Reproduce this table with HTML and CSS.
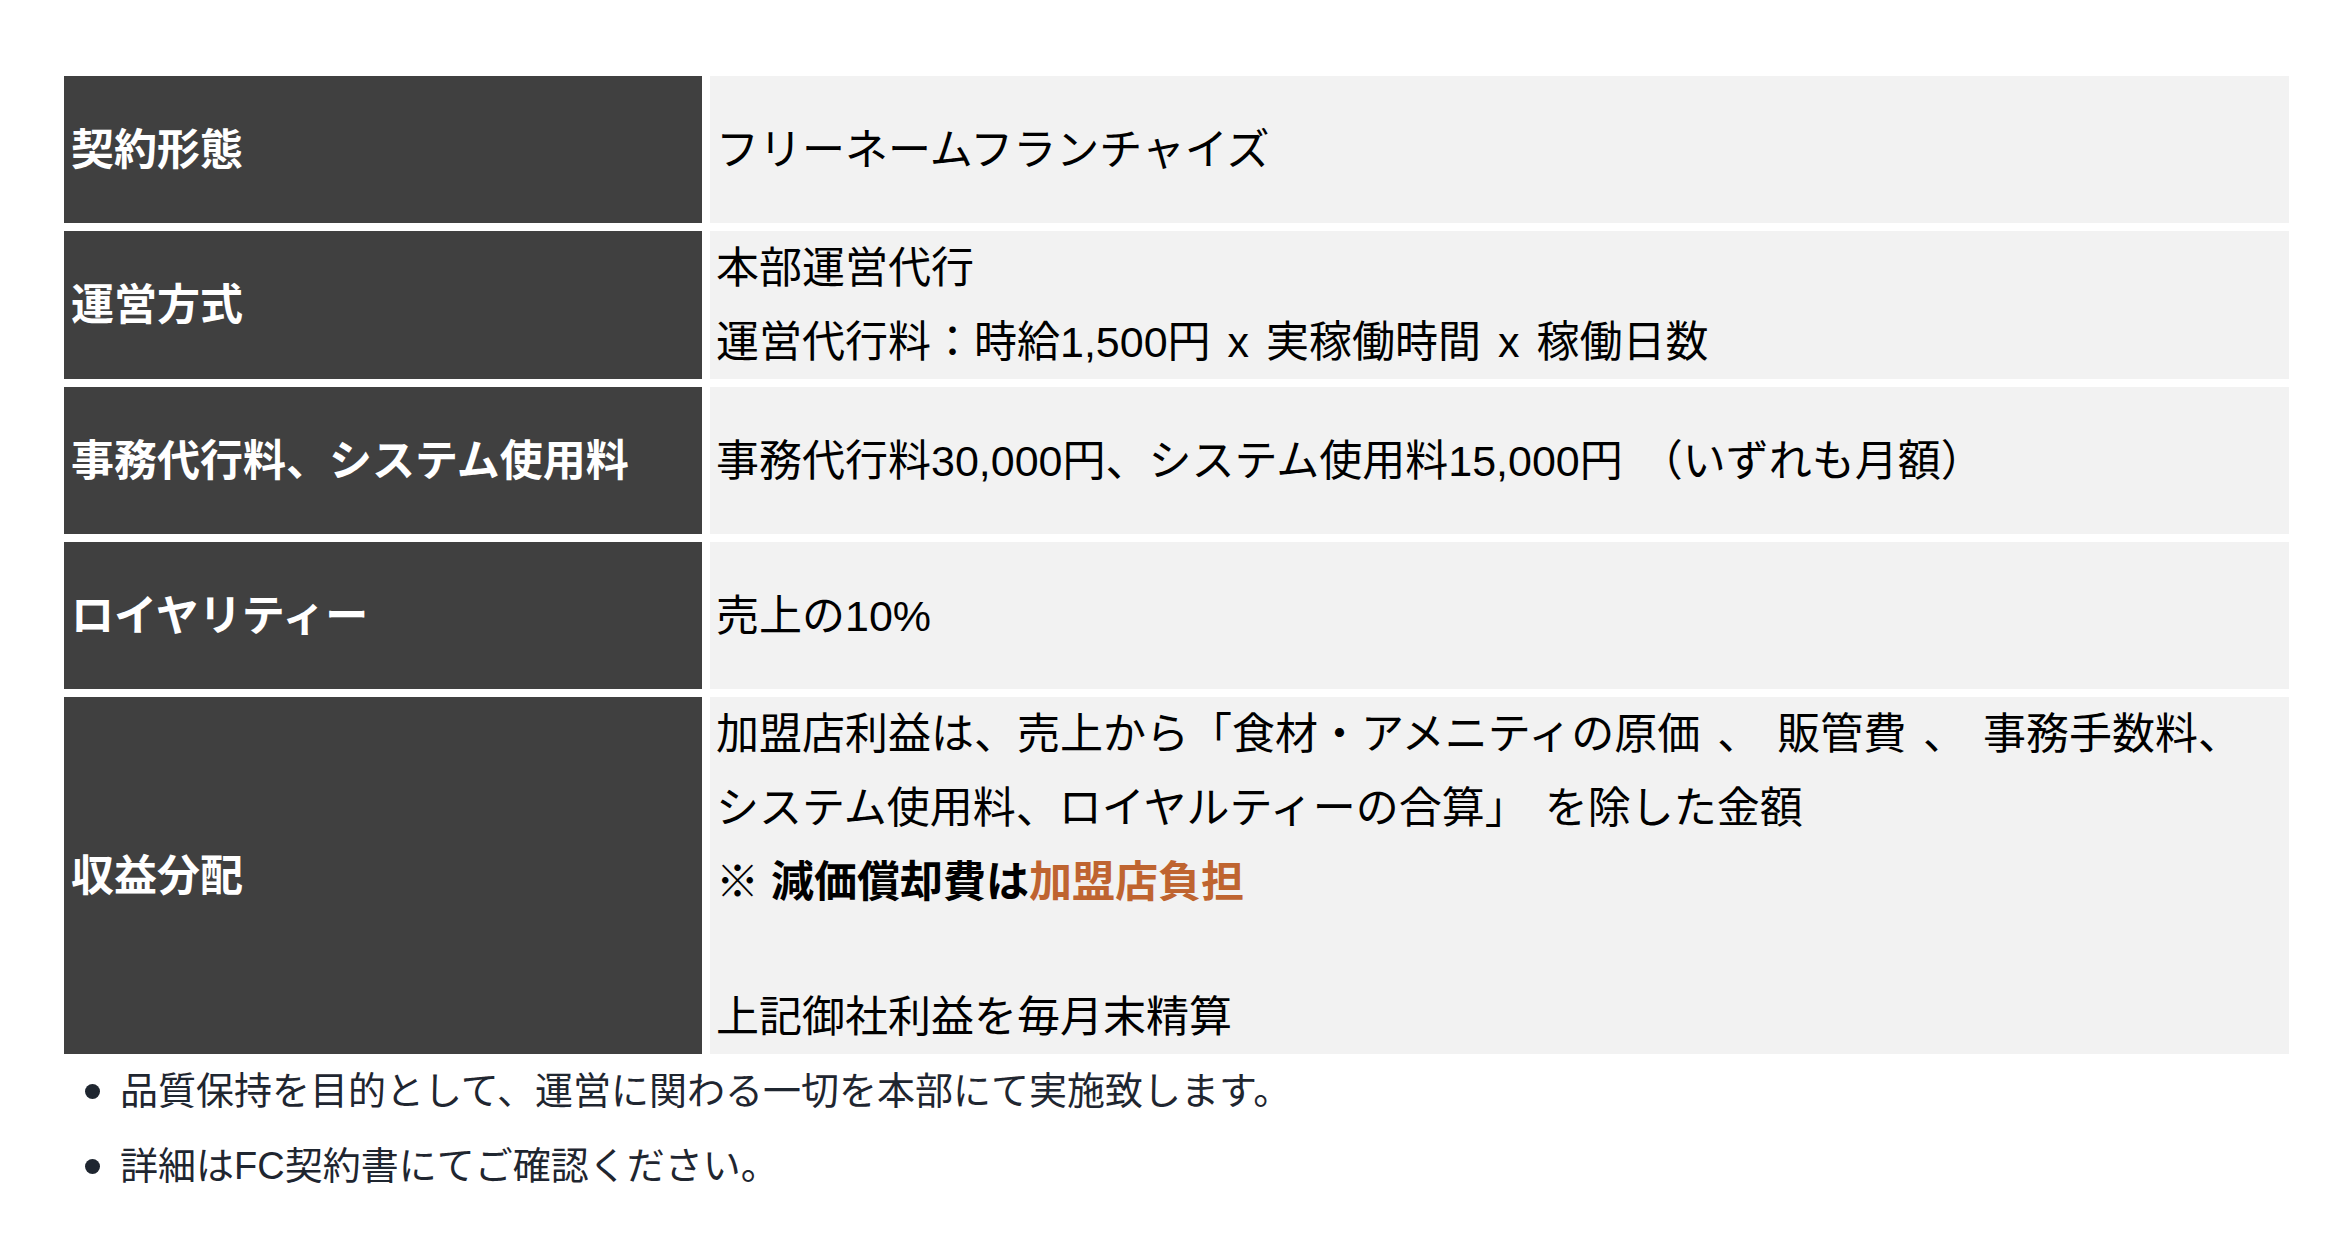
FILE: index.html
```html
<!DOCTYPE html>
<html lang="ja">
<head>
<meta charset="utf-8">
<title>FC契約概要</title>
<link rel="stylesheet" href="styles.css">
</head>
<body>
<div class="page">
  <dl class="spec">
    <dt class="label">契約形態</dt>
    <dd class="value">フリーネームフランチャイズ</dd>

    <dt class="label">運営方式</dt>
    <dd class="value">本部運営代行<br>運営代行料：時給1,500円 x 実稼働時間 x 稼働日数</dd>

    <dt class="label">事務代行料、システム使用料</dt>
    <dd class="value">事務代行料30,000円、システム使用料15,000円 （いずれも月額）</dd>

    <dt class="label">ロイヤリティー</dt>
    <dd class="value">売上の10%</dd>

    <dt class="label">収益分配</dt>
    <dd class="value">
      <p class="para">加盟店利益は、売上から「食材・アメニティの原価 、 販管費 、 事務手数料、<br>システム使用料、ロイヤルティーの合算」 を除した金額<br><strong class="note">※ 減価償却費は<span class="accent">加盟店負担</span></strong></p>
      <p class="para later">上記御社利益を毎月末精算</p>
    </dd>
  </dl>
  <ul class="notes">
    <li class="notes-item">品質保持を目的として、運営に関わる一切を本部にて実施致します。</li>
    <li class="notes-item">詳細はFC契約書にてご確認ください。</li>
  </ul>
</div>
</body>
</html>
```

FILE: styles.css
```css
html, body {
  margin: 0;
  padding: 0;
  background: #ffffff;
}

body {
  font-family: "Liberation Sans", "Noto Sans CJK JP", sans-serif;
}

.page {
  padding: 76px 41px 0 64px;
}

.spec {
  display: grid;
  grid-template-columns: 638px 1fr;
  gap: 8px;
  margin: 0;
}

.label {
  display: flex;
  align-items: center;
  min-height: 147px;
  margin: 0;
  padding: 0 7px;
  background: #404040;
  color: #ffffff;
  font-size: 43px;
  font-weight: 700;
  line-height: 74px;
}

.value {
  display: flex;
  flex-direction: column;
  justify-content: center;
  min-height: 147px;
  margin: 0;
  padding: 0 6px;
  background: #f2f2f2;
  color: #000000;
  font-size: 43px;
  line-height: 74px;
  word-spacing: 5px;
}

.para {
  margin: 0;
}

.para.later {
  margin-top: 61px;
}

.note {
  font-weight: 700;
  word-spacing: 0;
}

.accent {
  color: #bf6430;
}

.notes {
  list-style: none;
  margin: 0;
  padding: 0;
}

.notes-item {
  position: relative;
  padding-left: 56px;
  font-size: 38px;
  line-height: 75px;
  color: #1f2630;
}

.notes-item::before {
  content: "";
  position: absolute;
  left: 21px;
  top: 30px;
  width: 15px;
  height: 15px;
  border-radius: 50%;
  background: #1f2630;
}
```
